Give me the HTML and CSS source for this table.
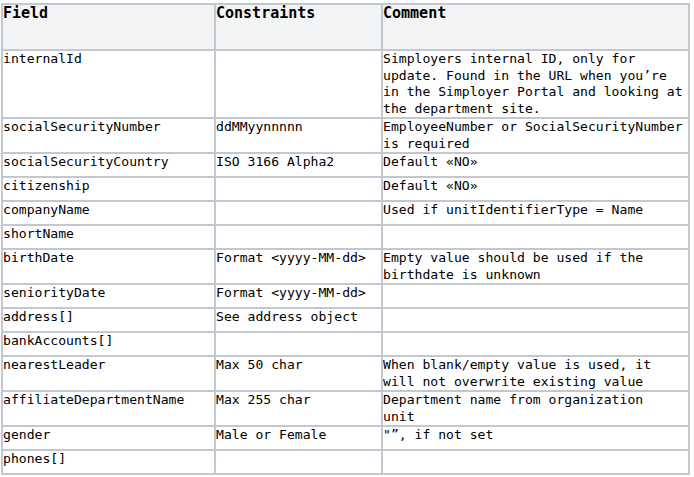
FILE: index.html
```html
<!DOCTYPE html>
<html>
<head>
<meta charset="utf-8">
<link rel="stylesheet" href="styles.css">
</head>
<body>
<table class="spec">
  <colgroup>
    <col class="c-field">
    <col class="c-cons">
    <col class="c-comm">
  </colgroup>
  <thead>
    <tr class="head"><th>Field</th><th>Constraints</th><th>Comment</th></tr>
  </thead>
  <tbody>
    <tr><td>internalId</td><td></td><td>Simployers internal ID, only for<br>update. Found in the URL when you’re<br>in the Simployer Portal and looking at<br>the department site.</td></tr>
    <tr><td>socialSecurityNumber</td><td>ddMMyynnnnn</td><td>EmployeeNumber or SocialSecurityNumber<br>is required</td></tr>
    <tr><td>socialSecurityCountry</td><td>ISO 3166 Alpha2</td><td>Default «NO»</td></tr>
    <tr><td>citizenship</td><td></td><td>Default «NO»</td></tr>
    <tr><td>companyName</td><td></td><td>Used if unitIdentifierType = Name</td></tr>
    <tr><td>shortName</td><td></td><td></td></tr>
    <tr><td>birthDate</td><td>Format &lt;yyyy-MM-dd&gt;</td><td>Empty value should be used if the<br>birthdate is unknown</td></tr>
    <tr><td>seniorityDate</td><td>Format &lt;yyyy-MM-dd&gt;</td><td></td></tr>
    <tr><td>address[]</td><td>See address object</td><td></td></tr>
    <tr><td>bankAccounts[]</td><td></td><td></td></tr>
    <tr><td>nearestLeader</td><td>Max 50 char</td><td>When blank/empty value is used, it<br>will not overwrite existing value</td></tr>
    <tr><td>affiliateDepartmentName</td><td>Max 255 char</td><td>Department name from organization<br>unit</td></tr>
    <tr><td>gender</td><td>Male or Female</td><td>"”, if not set</td></tr>
    <tr><td>phones[]</td><td></td><td></td></tr>
  </tbody>
</table>
</body>
</html>
```
FILE: styles.css
```css
html, body {
  margin: 0;
  padding: 0;
  background: #ffffff;
}

body {
  padding: 3px 0 0 1px;
  font-family: "DejaVu Sans Mono", "Liberation Mono", monospace;
  font-size: 13.1px;
  line-height: 16.5px;
  color: #000000;
}

.spec {
  border-collapse: collapse;
  table-layout: fixed;
  width: 689px;
}

.c-field { width: 213px; }
.c-cons { width: 167px; }
.c-comm { width: 307px; }

.spec th,
.spec td {
  border: 2px solid #c3c7cf;
  padding: 0;
  text-align: left;
  vertical-align: top;
  white-space: nowrap;
  overflow: hidden;
}

.spec th {
  font-size: 15px;
  font-weight: bold;
  background: #f3f4f6;
  height: 44px;
}

.spec td {
  height: 22px;
}
```
